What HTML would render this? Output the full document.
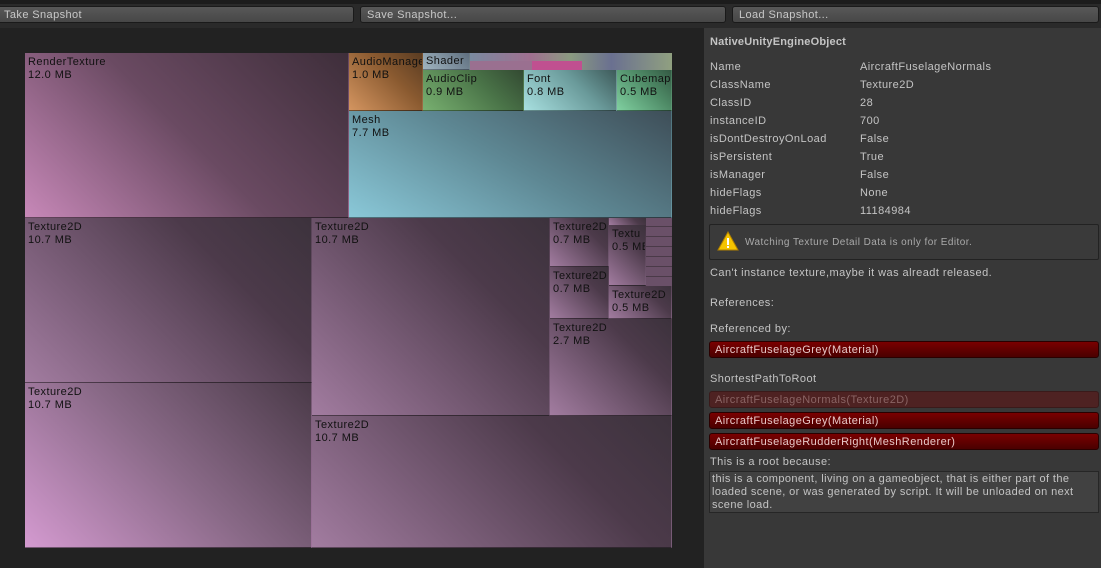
<!DOCTYPE html>
<html><head><style>
*{margin:0;padding:0;box-sizing:border-box}
body{width:1101px;height:568px;background:#222;font-family:"Liberation Sans",sans-serif;font-size:11px;position:relative;overflow:hidden}
.a{position:absolute}
.btn{position:absolute;top:6px;height:17px;border:1px solid #1a1a1a;border-radius:3px;background:linear-gradient(#585858,#474747);color:#c8c8c8;font-size:11px;padding:1px 6px;line-height:14px;letter-spacing:.4px}
.c{position:absolute;color:#111;font-size:11px;letter-spacing:.45px;line-height:13px;padding:3px 3px;overflow:hidden;white-space:nowrap;border-right:1px solid rgba(0,0,0,.25);border-bottom:1px solid rgba(0,0,0,.25)}
.tx{background:linear-gradient(45deg,#a27ca0,#4c3a4a 70%,#3c323c)}
.row{position:absolute;left:710px;color:#c4c4c4;letter-spacing:.45px;white-space:nowrap}
.v{position:absolute;left:860px;color:#c4c4c4;letter-spacing:.45px}
.red{position:absolute;left:709px;width:390px;height:17px;border-radius:3px;background:linear-gradient(#7a0000,#4a0000);color:#e8c8c8;padding-left:5px;line-height:16px;border:1px solid #2a0000;letter-spacing:.45px}
</style></head><body>
<div class="a" style="left:0;top:0;width:1101px;height:28px;background:#2a2a2a"></div>
<div class="a" style="left:0;top:0;width:1101px;height:4px;background:#1c1c1c"></div>
<div class="btn" style="left:-3px;width:357px">Take Snapshot</div>
<div class="btn" style="left:360px;width:366px">Save Snapshot...</div>
<div class="btn" style="left:732px;width:367px">Load Snapshot...</div>
<div class="a" style="left:704px;top:28px;width:397px;height:540px;background:#383838"></div>

<div class="c" style="left:25px;top:53px;width:324px;height:165px;background:linear-gradient(45deg,#c788b8,#6a4a62 50%,#3e2e3a)">RenderTexture<br>12.0 MB</div>
<div class="c" style="left:349px;top:53px;width:74px;height:58px;background:linear-gradient(45deg,#d49560,#8a5a30 60%,#5a3c22)">AudioManager<br>1.0 MB</div>
<div class="c" style="left:423px;top:53px;width:47px;height:17px;background:linear-gradient(45deg,#a0b4c0,#607080);padding-top:2px">Shader</div>
<div class="a" style="left:470px;top:53px;width:202px;height:17px;background:linear-gradient(90deg,#7a8aa0,#a07090 30%,#8a9a80 50%,#6a7090 70%,#90a080)"></div>
<div class="a" style="left:470px;top:61px;width:62px;height:9px;background:#9a7090"></div>
<div class="a" style="left:532px;top:61px;width:50px;height:9px;background:#c05090"></div>
<div class="c" style="left:423px;top:70px;width:101px;height:41px;background:linear-gradient(45deg,#78b070,#4a7448 60%,#334a32)">AudioClip<br>0.9 MB</div>
<div class="c" style="left:524px;top:70px;width:93px;height:41px;background:linear-gradient(45deg,#a8e0e0,#6a9a9a 60%,#3e5a5a)">Font<br>0.8 MB</div>
<div class="c" style="left:617px;top:70px;width:55px;height:41px;background:linear-gradient(45deg,#80d0a0,#4e8a66 60%,#345a44)">Cubemap<br>0.5 MB</div>
<div class="c" style="left:349px;top:111px;width:323px;height:107px;background:linear-gradient(30deg,#8ac8d8,#5e8894 50%,#3e4e58)">Mesh<br>7.7 MB</div>

<div class="c tx" style="left:25px;top:218px;width:287px;height:165px">Texture2D<br>10.7 MB</div>
<div class="c" style="left:25px;top:383px;width:287px;height:165px;background:linear-gradient(45deg,#d49ad0,#8a6a88 50%,#4a3a48)">Texture2D<br>10.7 MB</div>
<div class="c tx" style="left:312px;top:218px;width:238px;height:198px">Texture2D<br>10.7 MB</div>
<div class="c tx" style="left:312px;top:416px;width:360px;height:132px">Texture2D<br>10.7 MB</div>
<div class="c tx" style="left:550px;top:218px;width:59px;height:49px">Texture2D<br>0.7 MB</div>
<div class="c tx" style="left:550px;top:267px;width:59px;height:52px">Texture2D<br>0.7 MB</div>
<div class="c tx" style="left:609px;top:225px;width:37px;height:61px">Textu<br>0.5 MB</div>
<div class="a tx" style="left:609px;top:218px;width:37px;height:7px"></div>
<div class="a" style="left:646px;top:218px;width:26px;height:68px;background:repeating-linear-gradient(0deg,#6a5068 0 9px,#4a3a48 9px 10px),linear-gradient(90deg,#6a5068,#5a4458)"></div>
<div class="c tx" style="left:609px;top:286px;width:63px;height:33px">Texture2D<br>0.5 MB</div>
<div class="c tx" style="left:550px;top:319px;width:122px;height:97px">Texture2D<br>2.7 MB</div>

<div class="row" style="top:36px;font-weight:bold;letter-spacing:.2px">NativeUnityEngineObject</div>
<div class="row" style="top:61px">Name</div><div class="v" style="top:61px">AircraftFuselageNormals</div>
<div class="row" style="top:79px">ClassName</div><div class="v" style="top:79px">Texture2D</div>
<div class="row" style="top:97px">ClassID</div><div class="v" style="top:97px">28</div>
<div class="row" style="top:115px">instanceID</div><div class="v" style="top:115px">700</div>
<div class="row" style="top:133px">isDontDestroyOnLoad</div><div class="v" style="top:133px">False</div>
<div class="row" style="top:151px">isPersistent</div><div class="v" style="top:151px">True</div>
<div class="row" style="top:169px">isManager</div><div class="v" style="top:169px">False</div>
<div class="row" style="top:187px">hideFlags</div><div class="v" style="top:187px">None</div>
<div class="row" style="top:205px">hideFlags</div><div class="v" style="top:205px">11184984</div>
<div class="a" style="left:709px;top:224px;width:390px;height:36px;border:1px solid #222;background:#3a3a3a;border-radius:2px"></div>
<svg class="a" style="left:717px;top:231px" width="22" height="20"><path d="M11 1L21 19H1Z" fill="#f5c400" stroke="#b08000"/><rect x="10" y="7" width="2" height="7" fill="#fff"/><rect x="10" y="15" width="2" height="2" fill="#fff"/></svg>
<div class="row" style="left:745px;top:237px;font-size:10px;color:#aaa">Watching Texture Detail Data is only for Editor.</div>
<div class="row" style="top:267px">Can't instance texture,maybe it was alreadt released.</div>
<div class="row" style="top:297px">References:</div>
<div class="row" style="top:323px">Referenced by:</div>
<div class="red" style="top:341px">AircraftFuselageGrey(Material)</div>
<div class="row" style="top:373px">ShortestPathToRoot</div>
<div class="red" style="top:391px;background:#4e2222;color:#8a6464;border-color:#3a1a1a">AircraftFuselageNormals(Texture2D)</div>
<div class="red" style="top:412px">AircraftFuselageGrey(Material)</div>
<div class="red" style="top:433px">AircraftFuselageRudderRight(MeshRenderer)</div>
<div class="row" style="top:456px">This is a root because:</div>
<div class="a" style="left:709px;top:471px;width:390px;height:42px;background:#414141;border:1px solid #262626;color:#c4c4c4;font-size:11px;letter-spacing:.4px;line-height:13px;padding:1px 2px">this is a component, living on a gameobject, that is either part of the loaded scene, or was generated by script. It will be unloaded on next scene load.</div>
</body></html>
